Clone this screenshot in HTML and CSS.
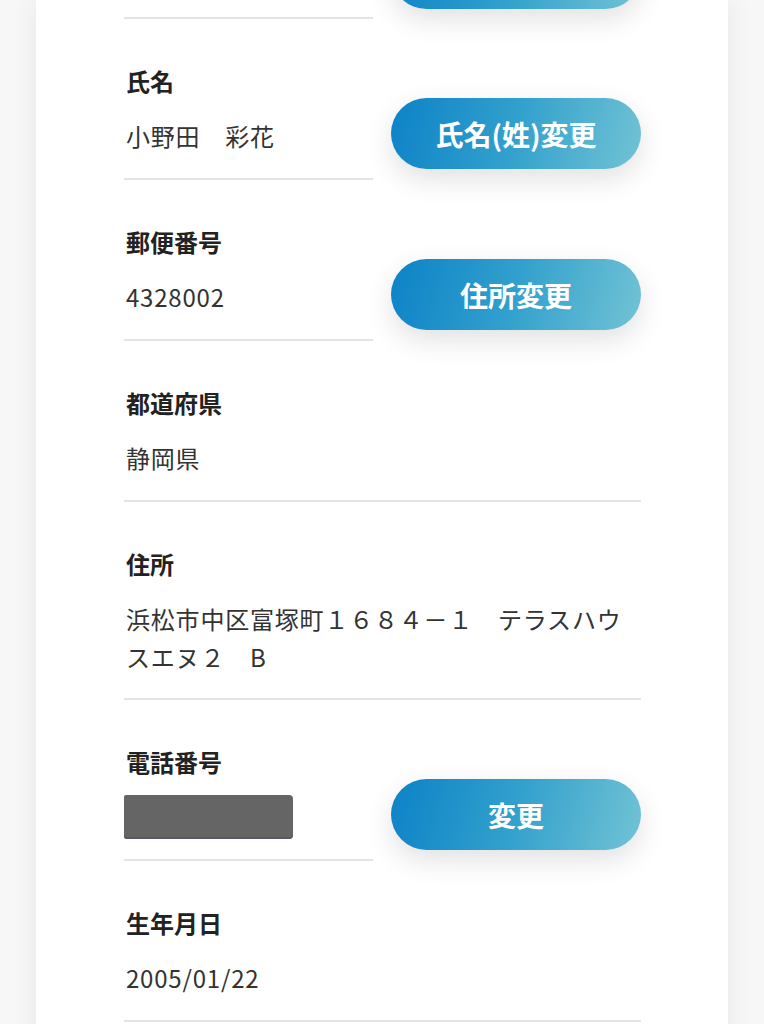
FILE: index.html
```html
<!DOCTYPE html>
<html lang="ja">
<head>
  <meta charset="UTF-8">
  <meta name="viewport" content="width=device-width, initial-scale=1.0">
  <title>会員情報</title>
  <link rel="stylesheet" href="styles.css">
</head>
<body>
  <div class="profile-card">
    <!-- row scrolled mostly out of view -->
    <div class="field-row partial">
      <div class="field-info"></div>
      <div class="field-action">
        <button class="change-button" aria-label="変更"></button>
      </div>
    </div>

    <div class="field-row">
      <div class="field-info">
        <div class="field-label">氏名</div>
        <div class="field-value">小野田　彩花</div>
      </div>
      <div class="field-action">
        <button class="change-button">氏名(姓)変更</button>
      </div>
    </div>

    <div class="field-row">
      <div class="field-info">
        <div class="field-label">郵便番号</div>
        <div class="field-value">4328002</div>
      </div>
      <div class="field-action">
        <button class="change-button">住所変更</button>
      </div>
    </div>

    <div class="field-row">
      <div class="field-info full">
        <div class="field-label">都道府県</div>
        <div class="field-value">静岡県</div>
      </div>
    </div>

    <div class="field-row address">
      <div class="field-info full">
        <div class="field-label">住所</div>
        <div class="field-value">浜松市中区富塚町１６８４－１　テラスハウスエヌ２　B</div>
      </div>
    </div>

    <div class="field-row">
      <div class="field-info">
        <div class="field-label">電話番号</div>
        <div class="field-value">
          <span class="redacted" aria-label="非表示"></span>
        </div>
      </div>
      <div class="field-action">
        <button class="change-button">変更</button>
      </div>
    </div>

    <div class="field-row">
      <div class="field-info full">
        <div class="field-label">生年月日</div>
        <div class="field-value">2005/01/22</div>
      </div>
    </div>
  </div>
</body>
</html>
```

FILE: styles.css
```css
:root {
  --text-dark: #222222;
  --text-value: #333333;
  --divider: #e4e4e4;
  --blue-start: #0c82c7;
  --blue-end: #72c3d4;
}

body {
  font-family: "Noto Sans CJK JP", "Noto Sans", sans-serif;
  margin: 0;
  padding: 0;
  background-color: #f7f7f7;
  color: var(--text-value);
}

.profile-card {
  width: 517px;
  margin: 0 auto;
  padding: 0 87px 40px 88px;
  background-color: #ffffff;
  box-shadow: 0 0 26px rgba(0, 0, 0, 0.07);
}

.field-row {
  display: flex;
  align-items: flex-end;
  gap: 18px;
}

.field-row.partial {
  height: 19px;
}

.field-row.partial .field-info {
  padding: 0;
  height: 17px;
}

.field-row.partial .field-action {
  padding-bottom: 10px;
}

.field-info {
  flex: 0 0 249px;
  padding: 44px 0 23px;
  border-bottom: 2px solid var(--divider);
}

.field-info.full {
  flex: 1;
}

.field-row.address .field-info {
  padding-bottom: 22px;
}

.field-label {
  font-size: 24px;
  line-height: 36px;
  font-weight: bold;
  color: var(--text-dark);
  margin-bottom: 18px;
  padding-left: 2px;
}

.field-value {
  font-size: 24px;
  line-height: 38px;
  letter-spacing: 0.8px;
  color: var(--text-value);
  padding-left: 2px;
}

.redacted {
  display: block;
  width: 169px;
  height: 44px;
  margin: -3px 0 -3px -2px;
  background-color: #656565;
  border-radius: 2px 4px 4px 3px;
  box-shadow: inset 0 -2px 0 #555a66;
}

.field-action {
  flex: 0 0 250px;
  padding-bottom: 11px;
}

.change-button {
  display: block;
  width: 250px;
  height: 71px;
  border: none;
  border-radius: 36px;
  background-image: linear-gradient(105deg, var(--blue-start) 0%, #33a1cd 50%, var(--blue-end) 100%);
  box-shadow: 0 10px 28px rgba(0, 0, 0, 0.12);
  color: #ffffff;
  font-family: "Noto Sans CJK JP", sans-serif;
  font-size: 28px;
  font-weight: bold;
  cursor: pointer;
}
```
